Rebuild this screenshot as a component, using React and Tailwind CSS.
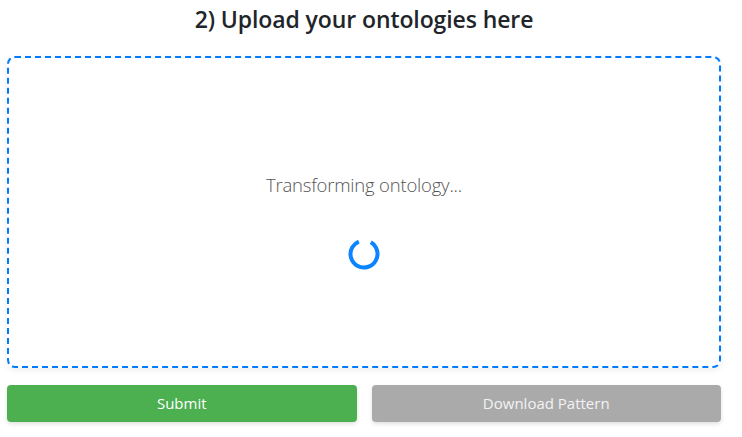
import React from 'react'

function Spinner() {
  return (
    <svg width="32" height="32" viewBox="0 0 32 32" className="block">
      <circle
        cx="16"
        cy="16"
        r="13.5"
        fill="none"
        stroke="#0a84ff"
        strokeWidth="4"
        strokeDasharray="72 13"
        transform="rotate(-60 16 16)"
      />
    </svg>
  )
}

export default function App() {
  return (
    <div className="w-[742px] h-[437px] bg-white" style={{ fontFamily: '"Open Sans", "Noto Sans", sans-serif' }}>
      <div className="ml-[7px] w-[714px] pt-[4px]">
        <h2 className="text-center text-[23px] font-semibold text-[#212529] leading-[30px] tracking-[-0.1px]">
          2) Upload your ontologies here
        </h2>

        <div className="mt-[22px] h-[312px] rounded-[8px] border-2 border-dashed border-[#007bff] shadow-[0_2px_6px_rgba(0,0,0,0.08)] flex flex-col items-center justify-center">
          <p className="mt-[18px] text-[18.5px] font-light text-[#555] leading-[24px] mb-[9px] tracking-[-0.2px]">
            Transforming ontology...
          </p>
          <div className="mt-[32px]">
            <Spinner />
          </div>
        </div>

        <div className="mt-[17px] flex gap-[15px]">
          <button className="flex-1 h-[37px] rounded-[4px] bg-[#4caf50] text-white text-[15px] shadow-[0_2px_4px_rgba(0,0,0,0.12)]">
            Submit
          </button>
          <button className="flex-1 h-[37px] rounded-[4px] bg-[#aaaaaa] text-[#f3f3f3] text-[15px] shadow-[0_2px_4px_rgba(0,0,0,0.12)]">
            Download Pattern
          </button>
        </div>
      </div>
    </div>
  )
}
